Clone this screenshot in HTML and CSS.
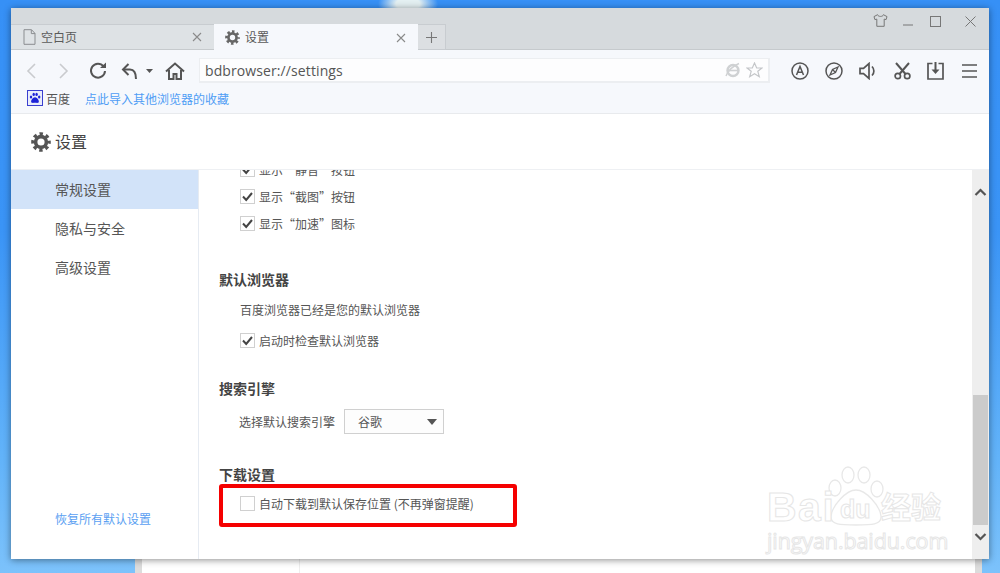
FILE: index.html
```html
<!DOCTYPE html>
<html lang="zh-CN">
<head>
<meta charset="utf-8">
<title>设置</title>
<link rel="stylesheet" href="styles.css">
</head>
<body>
<svg class="defs" width="0" height="0" aria-hidden="true">
  <defs>
    <symbol id="gear" viewBox="0 0 20 20">
      <circle cx="10" cy="10" r="5.4" fill="none" stroke="currentColor" stroke-width="3.6"/>
      <circle cx="10" cy="10" r="8" fill="none" stroke="currentColor" stroke-width="3.6" stroke-dasharray="3.3 2.98" stroke-dashoffset="1.65"/>
    </symbol>
    <symbol id="check" viewBox="0 0 15 15">
      <path d="M3 7.5l3.2 3.4L12 4" fill="none" stroke="#444" stroke-width="2"/>
    </symbol>
    <symbol id="close" viewBox="0 0 12 12">
      <path d="M2 2l8 8M10 2l-8 8" fill="none" stroke="currentColor" stroke-width="1.1"/>
    </symbol>
  </defs>
</svg>

<div class="backwin"><div class="backline"></div></div>

<main class="window">
  <header class="tabbar">
    <div class="tabs">
      <div class="tab tab-idle">
        <svg class="tab-icon" width="13" height="16" viewBox="0 0 13 16"><path d="M1 .7h7.5L12 4.4v10.9H1zM8.3.9v3.7H12" fill="none" stroke="#8a8d90" stroke-width="1"/></svg>
        <span class="tab-title">空白页</span>
        <svg class="tab-close" width="12" height="12"><use href="#close"/></svg>
      </div>
      <div class="tab tab-active">
        <svg class="tab-icon tab-gear" width="15" height="15"><use href="#gear"/></svg>
        <span class="tab-title">设置</span>
        <svg class="tab-close" width="12" height="12"><use href="#close"/></svg>
      </div>
      <div class="tab-new">
        <svg width="13" height="13" viewBox="0 0 13 13"><path d="M6.5 1v11M1 6.5h11" stroke="#777" stroke-width="1.1" fill="none"/></svg>
      </div>
    </div>
    <div class="winctl">
      <svg class="ctl ctl-shirt" width="15" height="13" viewBox="0 0 15 13"><path d="M4.6.7L1 2.6l.9 3 1.9-.5v7.2h7.4V5.1l1.9.5.9-3L10.400.7c-.5 2.300-5.300 2.300-5.800 0z" fill="none" stroke="#777" stroke-width="1"/></svg>
      <svg class="ctl ctl-min" width="10" height="10" viewBox="0 0 10 10"><path d="M0 9h10" stroke="#777" stroke-width="1"/></svg>
      <svg class="ctl ctl-max" width="11" height="11" viewBox="0 0 11 11"><rect x=".5" y=".5" width="10" height="10" fill="none" stroke="#777"/></svg>
      <svg class="ctl ctl-x" width="11" height="11" viewBox="0 0 11 11"><path d="M.5.5l10 10M10.500.5l-10 10" stroke="#777" fill="none"/></svg>
    </div>
  </header>

  <div class="toolbar">
    <div class="navrow">
      <span class="btn w-back"><svg width="12" height="18" viewBox="0 0 12 18"><path d="M10 2L3 9l7 7" fill="none" stroke="#c9cbce" stroke-width="1.600"/></svg></span>
      <span class="btn w-fwd"><svg width="12" height="18" viewBox="0 0 12 18"><path d="M2 2l7 7-7 7" fill="none" stroke="#c9cbce" stroke-width="1.600"/></svg></span>
      <span class="btn w-reload"><svg width="18" height="18" viewBox="0 0 18 18"><path d="M14.500 4.300A7 7 0 1 0 16 9" fill="none" stroke="#555" stroke-width="2"/><path d="M11 6h6V.5z" fill="#555"/></svg></span>
      <span class="btn w-undo"><svg width="18" height="18" viewBox="0 0 18 18"><path d="M7.500 2L2 7.500 7.500 13" fill="none" stroke="#555" stroke-width="2"/><path d="M2.500 7.500H9c4 0 6 3.500 6 9.500" fill="none" stroke="#555" stroke-width="2"/></svg></span>
      <span class="btn w-drop"><svg width="7" height="4" viewBox="0 0 7 4"><path d="M0 0h7L3.500 4z" fill="#555"/></svg></span>
      <span class="btn w-home"><svg width="20" height="18" viewBox="0 0 20 18"><path d="M1 9.500L10 1.500l9 8" fill="none" stroke="#555" stroke-width="2"/><path d="M4 8v9h4.500v-5h3v5H16V8" fill="none" stroke="#555" stroke-width="2"/></svg></span>
      <div class="address">
        <span class="url">bdbrowser://settings</span>
        <svg class="addr-ie" width="16" height="16" viewBox="0 0 16 16"><circle cx="8" cy="8.500" r="5.500" fill="none" stroke="#cfd1d3" stroke-width="2.400"/><path d="M3 8.500h10" stroke="#cfd1d3" stroke-width="1.600"/><path d="M1 14c2-5 7-10 13-12.500" fill="none" stroke="#cfd1d3" stroke-width="1.400"/></svg>
        <svg class="addr-star" width="17" height="16" viewBox="0 0 17 16"><path d="M8.500 1l2.200 5h5.300l-4.200 3.300 1.500 5.400-4.800-3-4.800 3 1.500-5.400L1 6h5.300z" fill="none" stroke="#c4c6c9" stroke-width="1.200"/></svg>
      </div>
      <div class="tools">
        <span class="btn w-tool"><svg width="18" height="18" viewBox="0 0 18 18"><circle cx="9" cy="9" r="8" fill="none" stroke="#555" stroke-width="1.500"/><path d="M5.500 13L9 4.500l3.500 8.500M6.700 10.200h4.600" fill="none" stroke="#555" stroke-width="1.500"/></svg></span>
        <span class="btn w-tool"><svg width="18" height="18" viewBox="0 0 18 18"><circle cx="9" cy="9" r="8" fill="none" stroke="#555" stroke-width="1.500"/><path d="M13 5l-2.500 5.500L5 13l2.500-5.500zM7.500 7.500l3 3" fill="none" stroke="#555" stroke-width="1.300"/></svg></span>
        <span class="btn w-tool"><svg width="18" height="18" viewBox="0 0 18 18"><path d="M1 6.300h3.500L10 1.500v15l-5.500-4.800H1z" fill="none" stroke="#555" stroke-width="1.700"/><path d="M13 4.500c2.500 2.500 2.500 6.500 0 9" fill="none" stroke="#555" stroke-width="1.700"/></svg></span>
        <span class="btn w-tool"><svg width="17" height="18" viewBox="0 0 17 18"><circle cx="3.800" cy="14" r="2.700" fill="none" stroke="#555" stroke-width="1.700"/><circle cx="13.200" cy="14" r="2.700" fill="none" stroke="#555" stroke-width="1.700"/><path d="M2 1l9.500 11M15 1L5.500 12" fill="none" stroke="#555" stroke-width="2"/></svg></span>
        <span class="btn w-tool-dl"><svg width="17" height="18" viewBox="0 0 17 18"><path d="M5.500 1.500H1v15.500h15V1.500h-4.500" fill="none" stroke="#555" stroke-width="1.700"/><path d="M8.500 0v9" stroke="#555" stroke-width="2" fill="none"/><path d="M4.500 7.500h8l-4 4.500z" fill="#555"/></svg></span>
        <span class="btn w-tool"><svg width="15" height="14" viewBox="0 0 15 14"><path d="M0 1h15M0 7h15M0 13h15" stroke="#555" stroke-width="1.700" fill="none"/></svg></span>
      </div>
    </div>
    <div class="bookmarks">
      <svg class="bd-icon" width="16" height="16" viewBox="0 0 16 16"><rect x=".5" y=".5" width="15" height="15" fill="#e9edfb" stroke="#3a3fd0"/><g fill="#1c22d8"><ellipse cx="4" cy="7" rx="1.200" ry="1.600"/><ellipse cx="6.700" cy="4.400" rx="1.200" ry="1.700"/><ellipse cx="9.600" cy="4.400" rx="1.200" ry="1.700"/><ellipse cx="12.200" cy="7" rx="1.200" ry="1.600"/><path d="M8 7.300c2 0 4.300 3 3.800 4.700-.5 1.400-2.500.7-3.800.7s-3.300.7-3.800-.7C3.700 10.300 6 7.300 8 7.300z"/></g></svg>
      <span class="bd-name">百度</span>
      <a class="bd-import">点此导入其他浏览器的收藏</a>
    </div>
  </div>

  <div class="page-head">
    <svg class="head-gear" width="20" height="20"><use href="#gear"/></svg>
    <h1 class="head-title">设置</h1>
  </div>

  <div class="page-body">
    <nav class="sidebar">
      <a class="side-item side-on">常规设置</a>
      <a class="side-item">隐私与安全</a>
      <a class="side-item">高级设置</a>
      <a class="side-reset">恢复所有默认设置</a>
    </nav>
    <section class="content">
      <div class="scroller">
        <div class="row"><span class="cb"><svg width="15" height="15"><use href="#check"/></svg></span><span>显示“静音”按钮</span></div>
        <div class="row"><span class="cb"><svg width="15" height="15"><use href="#check"/></svg></span><span>显示“截图”按钮</span></div>
        <div class="row"><span class="cb"><svg width="15" height="15"><use href="#check"/></svg></span><span>显示“加速”图标</span></div>

        <h2 class="sec sec-browser">默认浏览器</h2>
        <p class="note">百度浏览器已经是您的默认浏览器</p>
        <div class="row row-start"><span class="cb"><svg width="15" height="15"><use href="#check"/></svg></span><span>启动时检查默认浏览器</span></div>

        <h2 class="sec sec-search">搜索引擎</h2>
        <div class="engine">
          <span>选择默认搜索引擎</span>
          <div class="select"><span>谷歌</span><svg width="10" height="6" viewBox="0 0 10 6"><path d="M0 0h10L5 6z" fill="#555"/></svg></div>
        </div>

        <h2 class="sec sec-dl">下载设置</h2>
        <div class="row row-dl"><span class="cb"></span><span>自动下载到默认保存位置 (不再弹窗提醒)</span></div>
      </div>
      <div class="redbox"></div>
    </section>
    <aside class="scrollbar">
      <svg width="13" height="8" viewBox="0 0 13 8"><path d="M1.500 7l5-5 5 5" fill="none" stroke="#555" stroke-width="2.200"/></svg>
      <div class="thumb"></div>
      <svg width="13" height="8" viewBox="0 0 13 8"><path d="M1.500 1l5 5 5-5" fill="none" stroke="#555" stroke-width="2.200"/></svg>
    </aside>
  </div>
</main>

<div class="watermark">
  <svg class="wm-paw" width="56" height="62" viewBox="0 0 56 62"><g fill="#fff" stroke="#e8e8e8" stroke-width="1.300"><ellipse cx="7" cy="22" rx="6" ry="8"/><ellipse cx="20" cy="9" rx="6" ry="8"/><ellipse cx="36" cy="9" rx="6" ry="8"/><ellipse cx="49" cy="23" rx="6" ry="8"/><path d="M28 24c10 0 24 16 25 26 1 9-10 9-25 9s-26 0-25-9c1-10 15-26 25-26z"/></g></svg>
  <span class="wm-bai">Bai</span>
  <span class="wm-du">du</span>
  <span class="wm-cn">经验</span>
  <span class="wm-url">jingyan.baidu.com</span>
</div>
</body>
</html>
```

FILE: styles.css
```css
* { box-sizing: border-box; }
html, body { margin: 0; height: 100%; }
body {
  width: 1000px;
  height: 573px;
  overflow: hidden;
  position: relative;
  font-family: "Noto Sans CJK SC", "Liberation Sans", sans-serif;
  font-size: 12px;
  color: #555;
  background:
    radial-gradient(ellipse 30px 16px at 408px 4px, #e4f0f2 40%, rgba(228,240,242,0) 100%),
    linear-gradient(180deg, #3690f6 0%, #3a94f6 40%, #62b3f9 80%, #7cc2fb 100%);
}
.defs { position: absolute; }
svg { display: block; flex: none; }

.backwin {
  position: absolute;
  left: 135px;
  top: 540px;
  width: 847px;
  height: 40px;
  background: #fff;
  border-left: 7px solid #dcdcdc;
  border-right: 7px solid #dcdcdc;
}
.backline { position: absolute; left: 157px; top: 0; width: 1px; height: 40px; background: #eee; }

.window {
  position: absolute;
  left: 11px;
  top: 8px;
  width: 978px;
  height: 551px;
  display: flex;
  flex-direction: column;
  background: #fff;
  box-shadow: 0 1px 7px rgba(0,0,0,.45);
}

/* tab strip */
.tabbar {
  height: 42px;
  flex: none;
  display: flex;
  justify-content: space-between;
  background: #d6dadd;
  border-bottom: 1px solid #c6cacd;
}
.tabs { display: flex; align-items: flex-end; margin-bottom: -1px; }
.tab {
  width: 203px;
  height: 26px;
  display: flex;
  align-items: center;
  border-top: 1px solid #c8ccd0;
  color: #5a5a5a;
}
.tab-idle { background: #dee2e5; border-bottom: 1px solid #c6cacd; padding-left: 12px; }
.tab-active { width: 204px; background: #f6f8fc; padding-left: 11px; border-top-color: #f6f8fc; }
.tab-icon { margin-right: 5px; }
.tab-gear { color: #666; margin-right: 5px; margin-left: 0; }
.tab-title { flex: 1; line-height: 1; padding-bottom: 1px; }
.tab-close { color: #8a8a8a; margin-right: 11px; }
.tab-new {
  width: 28px;
  height: 26px;
  display: flex;
  align-items: center;
  justify-content: center;
  background: #dcdfe2;
  border: 1px solid #c8ccd0;
  border-left: 0;
}
.winctl { display: flex; align-items: center; height: 26px; }
.ctl-shirt { margin-right: 15px; margin-bottom: 1px; }
.ctl-min { margin-right: 17px; }
.ctl-max { margin-right: 24px; }
.ctl-x { margin-right: 13px; }

/* toolbar */
.toolbar {
  height: 64px;
  flex: none;
  background: #f6f8fc;
  border-bottom: 1px solid #e8eaed;
}
.navrow { display: flex; align-items: center; padding: 8px 3px 0 4px; height: 33px; }
.btn { display: flex; align-items: center; justify-content: center; height: 25px; flex: none; }
.w-back { width: 32px; }
.w-fwd { width: 34px; }
.w-reload { width: 34px; }
.w-undo { width: 30px; }
.w-drop { width: 8px; }
.w-home { width: 44px; }
.w-tool { width: 34px; }
.w-tool-dl { width: 33px; }
.address {
  width: 571px;
  height: 25px;
  margin-left: 2px;
  display: flex;
  align-items: center;
  padding: 0 5px 0 6px;
  background: #fdfdfe;
  border: 2px solid #eceef1;
  border-width: 1px 2px 2px 1px;
  color: #555;
}
.url { flex: 1; font-family: "Open Sans", "Liberation Sans", sans-serif; font-size: 14px; line-height: 1; padding-top: 2px; letter-spacing: .1px; margin-left: -1px; }
.addr-ie { margin-right: 5px; }
.tools { display: flex; margin-left: auto; }
.bookmarks { display: flex; align-items: center; padding: 0 0 0 16px; height: 30px; }
.bd-name { margin-left: 3px; }
.bd-import { margin-left: 15px; color: #4f9df5; }

/* page header */
.page-head {
  height: 56px;
  flex: none;
  display: flex;
  align-items: center;
  padding-left: 20px;
  border-bottom: 1px solid #eef0f3;
  background: #fff;
  color: #555;
}
.head-gear { margin-right: 5px; }
.head-title { margin: 0 0 2px -1px; font-size: 16px; font-weight: 400; color: #444; }

.page-body { flex: 1; display: flex; min-height: 0; }

.sidebar {
  width: 188px;
  flex: none;
  display: flex;
  flex-direction: column;
  border-right: 1px solid #e6ebf2;
  font-size: 14px;
}
.side-item { height: 39px; line-height: 39px; padding-left: 44px; color: #555; }
.side-on { background: #d2e3f9; }
.side-reset { margin-top: auto; margin-bottom: 31px; padding-left: 44px; font-size: 12px; line-height: 18px; color: #5b9ff2; }

.content { flex: 1; position: relative; overflow: hidden; }
.scroller { padding-left: 20px; margin-top: -14px; }
.row { display: flex; align-items: center; height: 27px; padding-left: 21px; gap: 4px; line-height: 1; }
.cb {
  width: 15px;
  height: 15px;
  flex: none;
  background: #fff;
  border: 1px solid #d0d0d0;
}
.cb svg { margin: -1px; }
.sec { margin: 0; font-size: 14px; font-weight: 700; line-height: 20px; color: #444; }
.sec-browser { margin-top: 32px; }
.note { margin: 11px 0 0; padding-left: 21px; line-height: 20px; }
.row-start { margin-top: 7px; }
.sec-search { margin-top: 24px; }
.engine { display: flex; align-items: center; gap: 9px; margin-top: 11px; padding-left: 20px; }
.select {
  width: 100px;
  height: 25px;
  display: flex;
  align-items: center;
  justify-content: space-between;
  padding: 0 6px 0 13px;
  background: #fdfdfd;
  border: 1px solid #d0d0d0;
}
.sec-dl { margin-top: 30px; }
.row-dl { margin-top: 6px; }
.redbox {
  position: absolute;
  left: 20px;
  top: 314px;
  width: 298px;
  height: 43px;
  border: 4px solid #f50000;
  border-radius: 3px;
}

.scrollbar {
  width: 17px;
  flex: none;
  display: flex;
  flex-direction: column;
  align-items: center;
  background: #eeeeee;
  padding-top: 18px;
  color: #555;
}
.thumb { width: 15px; height: 130px; margin-top: 199px; margin-bottom: 8px; background: #cbcbcb; }

/* baidu watermark */
.watermark { position: absolute; left: 760px; top: 460px; width: 200px; height: 100px; }
.watermark span { position: absolute; line-height: 1; color: #fff; -webkit-text-stroke: 1px #e6e6e6; }
.wm-paw { position: absolute; left: 68px; top: 6px; }
.wm-bai { left: 7px; top: 27px; font: 700 41px "Liberation Sans", sans-serif; letter-spacing: 1.5px; }
.wm-du { left: 80px; top: 37px; font: 700 25px "Liberation Sans", sans-serif; }
.wm-cn { left: 121px; top: 30px; font-size: 30px; font-weight: 700; }
.wm-url { left: 7px; top: 70px; font: 400 21.5px "Open Sans", "Liberation Sans", sans-serif; letter-spacing: -.1px; }
```
